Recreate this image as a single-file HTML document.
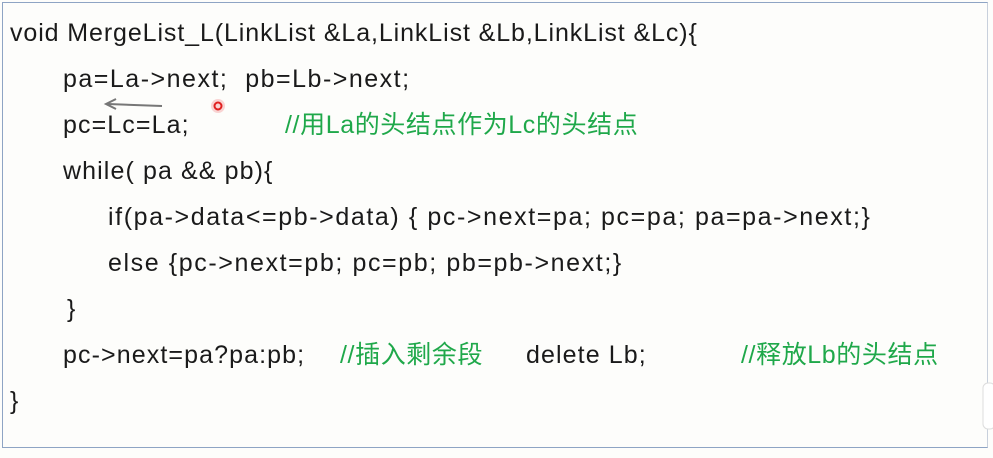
<!DOCTYPE html>
<html><head><meta charset="utf-8"><style>
body{margin:0;width:993px;height:458px;background:#fdfdfb;overflow:hidden;position:relative;font-family:"Liberation Sans","Noto Sans CJK SC",sans-serif;font-size:25px;letter-spacing:1.1px;color:#1a1a1a}
.frame{position:absolute;left:2px;top:2px;width:984px;height:444px;border:1px solid #8ea4c4;border-right-color:#c8d0dc}
.l{position:absolute;white-space:pre;line-height:30px}
.g{color:#1fa84a;letter-spacing:0.6px}
</style></head><body>
<div class="frame"></div>
<div class="l" style="left:10px;top:18px;letter-spacing:0.9px">void MergeList_L(LinkList &amp;La,LinkList &amp;Lb,LinkList &amp;Lc){</div>
<div class="l" style="left:63px;top:64px;letter-spacing:1.5px">pa=La-&gt;next;  pb=Lb-&gt;next;</div>
<div class="l" style="left:63px;top:110px">pc=Lc=La;</div>
<div class="l g" style="left:285px;top:110px">//用La的头结点作为Lc的头结点</div>
<div class="l" style="left:63px;top:156px">while( pa &amp;&amp; pb){</div>
<div class="l" style="left:108px;top:202px;letter-spacing:1.6px">if(pa-&gt;data&lt;=pb-&gt;data) { pc-&gt;next=pa; pc=pa; pa=pa-&gt;next;}</div>
<div class="l" style="left:108px;top:248px;letter-spacing:1.6px">else {pc-&gt;next=pb; pc=pb; pb=pb-&gt;next;}</div>
<div class="l" style="left:67px;top:294px">}</div>
<div class="l" style="left:63px;top:340px">pc-&gt;next=pa?pa:pb;</div>
<div class="l g" style="left:340px;top:340px">//插入剩余段</div>
<div class="l" style="left:526px;top:340px">delete Lb;</div>
<div class="l g" style="left:741px;top:340px">//释放Lb的头结点</div>
<div class="l" style="left:10px;top:386px">}</div>
<svg style="position:absolute;left:0;top:0" width="993" height="458">
<path d="M162 106 L108 104 M116 99 L106 104 L116 109" stroke="#777" stroke-width="2" fill="none"/>
<circle cx="218" cy="106" r="7" fill="#f8c8c8" opacity="0.8"/>
<circle cx="218" cy="106" r="3.5" fill="none" stroke="#e02020" stroke-width="2"/>
<rect x="983" y="383" width="12" height="46" rx="5" fill="#fff" stroke="#ddd"/>
</svg>
</body></html>
